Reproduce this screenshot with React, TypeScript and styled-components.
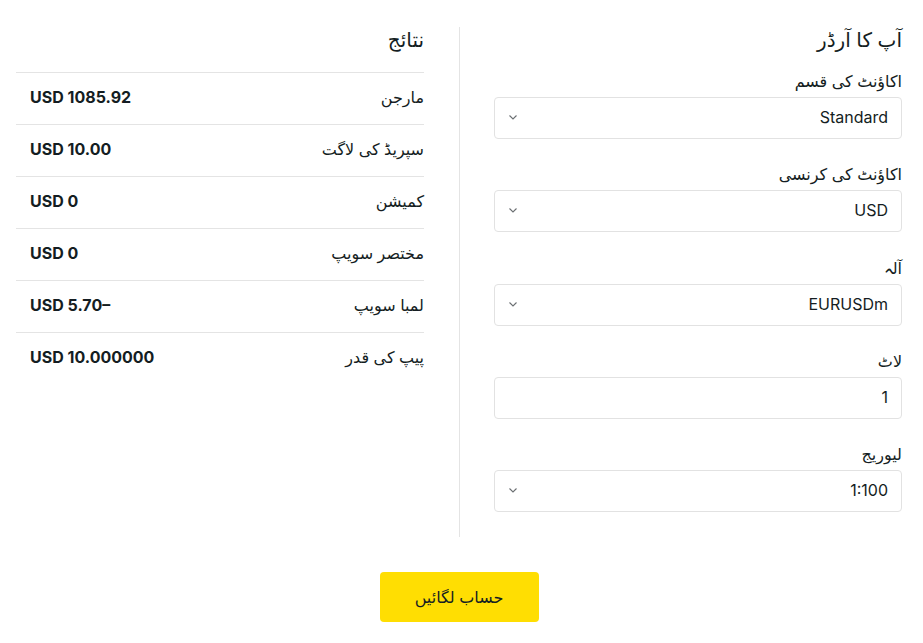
import React from 'react';
import styled, { createGlobalStyle } from 'styled-components';

const GlobalStyle = createGlobalStyle`
  html, body {
    margin: 0;
    padding: 0;
    background: #ffffff;
  }
  body {
    font-family: "Inter", "DejaVu Sans", "Noto Sans", sans-serif;
    color: #141d22;
  }
`;

const Page = styled.div`
  direction: rtl;
  padding: 27px 21px 0 16px;
`;

const Columns = styled.div`
  display: grid;
  grid-template-columns: 408px 1fr 408px;
  align-items: stretch;
`;

const FormColumn = styled.div`
  display: flex;
  flex-direction: column;
  padding-bottom: 25px;
`;

const Divider = styled.div`
  justify-self: center;
  width: 1px;
  background: #e4e4e4;
`;

const Title = styled.h2`
  margin: 0;
  font-size: 20px;
  font-weight: 400;
  line-height: 26px;
`;

const Field = styled.div<{ $first?: boolean }>`
  display: flex;
  flex-direction: column;
  margin-top: ${(p) => (p.$first ? '16px' : '23.3px')};
`;

const Label = styled.label`
  font-size: 16px;
  line-height: 24px;
  margin-bottom: 4px;
`;

const Box = styled.div`
  height: 42px;
  box-sizing: border-box;
  border: 1px solid #e2e2e2;
  border-radius: 4px;
  display: flex;
  align-items: center;
  justify-content: space-between;
  padding: 0 13px 2px 14px;
  font-size: 16px;
  color: #141d22;
  background: #fff;
`;

const Chevron = styled.svg`
  width: 12px;
  height: 12px;
  margin-left: -2px;
`;

const ResultsColumn = styled.div`
  display: flex;
  flex-direction: column;
`;

const ResultsHeader = styled.div`
  height: 46px;
  border-bottom: 1px solid #e4e4e4;
  box-sizing: border-box;
`;

const Row = styled.div<{ $last?: boolean }>`
  height: 52px;
  box-sizing: border-box;
  display: flex;
  align-items: center;
  justify-content: space-between;
  padding-left: 14px;
  padding-bottom: 4px;
  border-bottom: ${(p) => (p.$last ? 'none' : '1px solid #e4e4e4')};
`;

const RowLabel = styled.span`
  font-size: 16px;
`;

const RowValue = styled.span`
  direction: ltr;
  font-size: 16px;
  font-weight: 700;
`;

const Footer = styled.div`
  display: flex;
  justify-content: center;
  padding-top: 35px;
`;

const Button = styled.button`
  width: 159px;
  height: 50px;
  border: none;
  border-radius: 4px;
  background: #ffde02;
  color: #141d22;
  font-family: inherit;
  font-size: 16px;
  cursor: pointer;
`;

const ChevronIcon = () => (
  <Chevron viewBox="0 0 12 12" fill="none">
    <path d="M2.5 4.5 6 8l3.5-3.5" stroke="#6b6f72" strokeWidth="1.1" />
  </Chevron>
);

const fields = [
  { label: 'اکاؤنٹ کی قسم', value: 'Standard', select: true },
  { label: 'اکاؤنٹ کی کرنسی', value: 'USD', select: true },
  { label: 'آلہ', value: 'EURUSDm', select: true },
  { label: 'لاٹ', value: '1', select: false },
  { label: 'لیوریج', value: '1:100', select: true },
];

const results = [
  { label: 'مارجن', value: 'USD 1085.92' },
  { label: 'سپریڈ کی لاگت', value: 'USD 10.00' },
  { label: 'کمیشن', value: 'USD 0' },
  { label: 'مختصر سویپ', value: 'USD 0' },
  { label: 'لمبا سویپ', value: 'USD 5.70–' },
  { label: 'پیپ کی قدر', value: 'USD 10.000000' },
];

export default function App() {
  return (
    <Page>
      <GlobalStyle />
      <Columns>
        <FormColumn>
          <Title>آپ کا آرڈر</Title>
          {fields.map((f, i) => (
            <Field key={f.label} $first={i === 0}>
              <Label>{f.label}</Label>
              <Box>
                <span>{f.value}</span>
                {f.select && <ChevronIcon />}
              </Box>
            </Field>
          ))}
        </FormColumn>
        <Divider />
        <ResultsColumn>
          <ResultsHeader>
            <Title>نتائج</Title>
          </ResultsHeader>
          {results.map((r, i) => (
            <Row key={r.label} $last={i === results.length - 1}>
              <RowLabel>{r.label}</RowLabel>
              <RowValue>{r.value}</RowValue>
            </Row>
          ))}
        </ResultsColumn>
      </Columns>
      <Footer>
        <Button>حساب لگائیں</Button>
      </Footer>
    </Page>
  );
}
